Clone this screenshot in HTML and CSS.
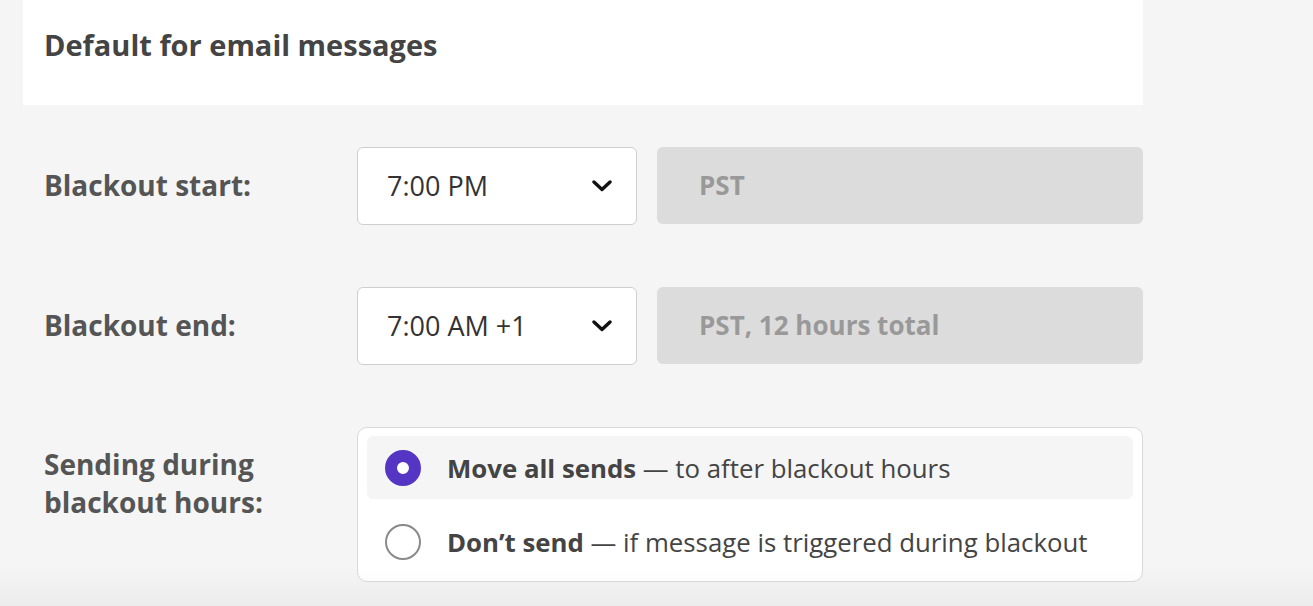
FILE: index.html
```html
<!DOCTYPE html>
<html>
<head>
    <title>Blackout hours</title>
    <link rel="stylesheet" href="styles.css">
</head>
<body>
    <div class="page">
        <div class="panel-header">
            <h2>Default for email messages</h2>
        </div>

        <div class="settings">
            <div class="row">
                <div class="label">Blackout start:</div>
                <div class="select">
                    <span>7:00 PM</span>
                    <svg class="chevron" width="20" height="12" viewBox="0 0 20 12">
                        <path d="M2 2 L10 9.5 L18 2" fill="none" stroke="#111" stroke-width="3.4" stroke-linecap="round" stroke-linejoin="round"/>
                    </svg>
                </div>
                <div class="readonly">PST</div>
            </div>

            <div class="row">
                <div class="label">Blackout end:</div>
                <div class="select">
                    <span>7:00 AM +1</span>
                    <svg class="chevron" width="20" height="12" viewBox="0 0 20 12">
                        <path d="M2 2 L10 9.5 L18 2" fill="none" stroke="#111" stroke-width="3.4" stroke-linecap="round" stroke-linejoin="round"/>
                    </svg>
                </div>
                <div class="readonly">PST, 12 hours total</div>
            </div>

            <div class="row">
                <div class="label label-multi">Sending during blackout hours:</div>
                <div class="radio-group">
                    <label class="option selected">
                        <span class="radio checked"></span>
                        <span class="option-text"><b>Move all sends</b> — to after blackout hours</span>
                    </label>
                    <label class="option">
                        <span class="radio"></span>
                        <span class="option-text"><b>Don’t send</b> — if message is triggered during blackout</span>
                    </label>
                </div>
            </div>
        </div>
    </div>
    <div class="bottom-shade"></div>
</body>
</html>
```

FILE: styles.css
```css
:root {
    --page-bg: #f5f5f5;
    --text-color: #444;
    --label-color: #555;
    --muted-color: #999;
    --border-color: #cfcfcf;
    --readonly-bg: #dcdcdc;
    --accent: #5536c4;
}

body {
    font-family: "Open Sans", "Liberation Sans", sans-serif;
    margin: 0;
    padding: 0;
    background-color: var(--page-bg);
    color: var(--text-color);
}

.page {
    width: 1120px;
    margin-left: 23px;
}

.panel-header {
    background-color: white;
    height: 105px;
    padding: 26px 21px 0;
    box-sizing: border-box;
}

.panel-header h2 {
    margin: 0;
    font-size: 29px;
    line-height: 38px;
    font-weight: 700;
    color: #444;
}

.settings {
    padding: 42px 0 0 21px;
    display: flex;
    flex-direction: column;
    gap: 62px;
}

.row {
    display: flex;
    gap: 20px;
}

.label {
    width: 293px;
    display: flex;
    align-items: center;
    padding-bottom: 3px;
    box-sizing: border-box;
    font-size: 28px;
    font-weight: 700;
    color: var(--label-color);
}

.label-multi {
    align-items: flex-start;
    padding: 18px 40px 0 0;
    line-height: 38px;
}

.select {
    width: 280px;
    height: 78px;
    box-sizing: border-box;
    border: 1px solid var(--border-color);
    border-radius: 6px;
    background-color: white;
    padding: 0 24px 2px 29px;
    display: flex;
    align-items: center;
    justify-content: space-between;
    font-size: 27px;
    color: #333;
}

.chevron {
    margin-top: 2px;
}

.readonly {
    width: 486px;
    height: 77px;
    box-sizing: border-box;
    background-color: var(--readonly-bg);
    border-radius: 6px;
    padding: 0 0 2px 42px;
    display: flex;
    align-items: center;
    font-size: 26px;
    font-weight: 700;
    color: var(--muted-color);
}

.radio-group {
    width: 786px;
    box-sizing: border-box;
    border: 1px solid #dadada;
    border-radius: 10px;
    background-color: white;
    padding: 8px 9px;
    display: flex;
    flex-direction: column;
    gap: 11px;
}

.option {
    height: 63px;
    border-radius: 6px;
    padding-left: 18px;
    display: flex;
    align-items: center;
    gap: 26px;
    font-size: 25.8px;
    color: var(--text-color);
    cursor: pointer;
}

.option.selected {
    background-color: var(--page-bg);
}

.option b {
    font-weight: 700;
}

.radio {
    width: 36px;
    height: 36px;
    box-sizing: border-box;
    border-radius: 50%;
    border: 2px solid #8a8a8a;
    background-color: white;
    flex-shrink: 0;
}

.radio.checked {
    border: 12px solid var(--accent);
}

.bottom-shade {
    position: fixed;
    left: 0;
    right: 0;
    bottom: 0;
    height: 40px;
    background: linear-gradient(to bottom, rgba(0,0,0,0), rgba(0,0,0,0.035));
    pointer-events: none;
}
```
